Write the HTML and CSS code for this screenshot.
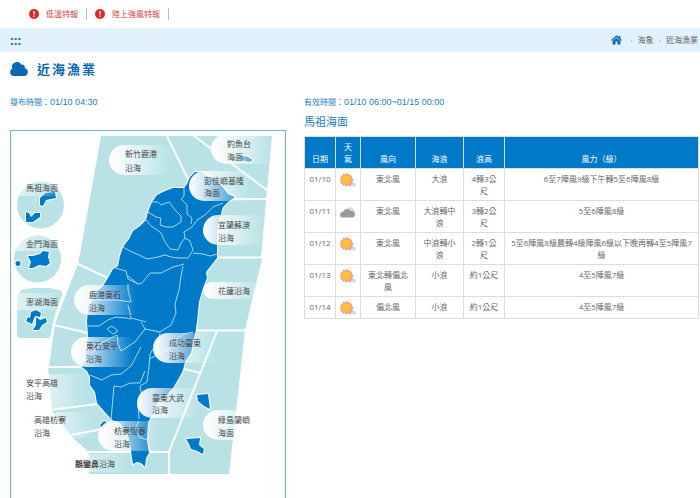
FILE: index.html
```html
<!DOCTYPE html>
<html lang="zh-Hant">
<head>
<meta charset="utf-8">
<title>近海漁業</title>
<link rel="stylesheet" href="styles.css">
</head>
<body>
<svg class="defs" aria-hidden="true">
  <symbol id="alert" viewBox="0 0 10 10"><circle cx="5" cy="5" r="5" fill="#d92b2b"/><path d="M4.4 2h1.2v3.7H4.4zM4.4 6.6h1.2v1.2H4.4z" fill="#fff"/></symbol>
  <symbol id="sun" viewBox="0 0 16 14">
    <path d="M9.500 13.400a2.200 2.200 0 0 1 .6-4 2.600 2.600 0 0 1 4.400.4 1.900 1.900 0 0 1-.1 3.600z" fill="#d9d9d9"/>
    <circle cx="6.500" cy="6.800" r="5.600" fill="none" stroke="#f4764c" stroke-width="1.600" stroke-dasharray="1.200 1"/>
    <circle cx="6.500" cy="6.800" r="4.800" fill="#ffbe3d" stroke="#f7844d" stroke-width=".6"/>
  </symbol>
  <symbol id="cloudy" viewBox="0 0 16 14">
    <path d="M7 10a4 4 0 0 1 .5-7 4 4 0 0 1 6 1.500A3 3 0 0 1 14 10z" fill="#dcdcdc"/>
    <path d="M2.800 12.500a2.800 2.800 0 0 1 .1-5.600 4.500 4.500 0 0 1 8-.7 3.200 3.200 0 0 1 1.400 6.300z" fill="#999"/>
  </symbol>
</svg>

<div class="alerts">
  <a class="alert" href="#"><svg class="alert-icon"><use href="#alert"/></svg>低溫特報</a>
  <a class="alert" href="#"><svg class="alert-icon"><use href="#alert"/></svg>陸上強風特報</a>
</div>

<nav class="crumbs">
  <a class="skip" href="#main">:::</a>
  <a class="home" href="#" aria-label="首頁"><svg viewBox="0 0 11 10"><path d="M5.500.2 0 5l.8.9 4.700-4 4.700 4L11 5 9.300 3.500V.8H7.700v1.300zM5.500 2.800 1.600 6.100V9.500h2.900V6.600h2v2.900h2.900V6.100z" fill="#0a69b0"/></svg></a>
  <span class="sep">›</span>
  <a href="#">海象</a>
  <span class="sep">›</span>
  <a href="#">近海漁業</a>
</nav>

<main id="main">
  <h1><svg class="cloud" viewBox="0 0 18 14"><path d="M4 14a4 4 0 0 1-1.800-7.500A5 5 0 0 1 11.400 2.700a2.700 2.700 0 0 1 3.300 3.500A3.950 3.950 0 0 1 14 14z" fill="#0a69b0"/></svg>近海漁業</h1>
  <div class="columns">
    <section>
      <p class="time">發布時間：<time>01/10 04:30</time></p>
      <div class="map">
        <svg viewBox="11 131 274 367" role="group" aria-label="近海漁業">
          <defs>
            <linearGradient id="fade"><stop offset="0" stop-color="#fff"/><stop offset=".25" stop-color="#fff" stop-opacity=".8"/><stop offset="1" stop-color="#fff" stop-opacity="0"/></linearGradient>
            <linearGradient id="haze"><stop offset="0" stop-color="#fff" stop-opacity=".55"/><stop offset="1" stop-color="#fff" stop-opacity="0"/></linearGradient>
            <path id="pill" d="M15 0H62V30H15A15 15 0 0 1 15 0z" fill="url(#fade)"/>
          </defs>
          <g class="sea">
            <path d="M101 136H272L261 257 262 259 245 330 240 375 229 474H89V452L72 437 52 411 48 366 54 325 78 264 82 243z"/>
            <circle cx="40.500" cy="205" r="23.500"/>
            <circle cx="37.500" cy="259" r="23.500"/>
            <path d="M17 301Q18 289 26 289Q45 286 59 290Q63 292 62 295L54 318 50 338H20Q17 338 17 334z"/>
          </g>
          <path class="bounds" d="M167 136 188 179M194 136 267 190M230 199H267M216 257.500H263M197 330.500H246M217 331 169 452V474M184 369 201 373M149 452H169M88 452H134M78 264 110 279M54 325 88 333M47 367H85M51 410 97 404M71 435 102 429"/>
          <path class="bounds" d="M64 294 54 325 48 366"/>
          <g class="land">
            <path d="M195 172 190 177 187 184 184 188 173 188 165 191 157 195 152 202 148 212 146 220 140 226 133 231 129 239 123 247 120 256 118 266 113 269 108 278 103 286 97 291 93 299 88 307 87 322 88 335 86 350 85 360 82 367 87 371 90 377 90 385 95 392 97 403 103 410 112 420 120 423 127 432 130 443 132 458 133 464 137 462 141 463 145 467 146 458 149 453 147 440 148 423 153 412 157 403 165 397 173 388 179 378 183 370 185 362 191 353 193 343 195 335 197 322 199 302 203 288 207 278 206 272 217 258 217 245 217 233 219 220 223 207 228 202 235 197 228 194 221 185 215 178 206 176 202 172z"/>
            <path d="M40 198 45 193 55 192 56 198 51 199 46 200 43 206 40 205z"/>
            <path d="M26 212 29 213 31 217 35 213 40 213 40 217 33 222 26 222z"/>
            <path d="M28 256 33 256 40 254 43 251 49 252 48 257 50 263 46 266 39 265 33 268 29 268 31 262z"/>
            <circle cx="18" cy="263.500" r="2.500"/>
            <path d="M31 312 36 310 41 313 40 317 35 316 32 324 26 321 28 317 30 318z"/>
            <path d="M36 317 40 320 46 318 47 322 42 325 39 330 33 330 36 325z"/>
            <path d="M239 155 248 157 253 160 249 162 241 160z"/>
            <path d="M197 395 208 394 210 409 204 406 198 401z"/>
            <path d="M186 439 200 438 199 445 204 449 203 454 197 451 191 449 189 444z"/>
            <path d="M102 430 100 425 104 421 108 423z"/>
          </g>
          <path class="counties" d="M152 202 158 202 161 205 169 202 176 211 181 216 181 222 173 227 166 227 160 225 161 218 156 217 148 212M146 220 151 226 156 229 161 233 165 242 170 249 178 250 181 243 185 238 184 232 192 227 197 220 205 215 213 207 223 203M184 188 184 196 181 199 187 205 187 214 192 218 191 224M192 188 198 183 202 181M123 247 130 251 139 255 147 259 158 257 165 255 171 257 179 258 188 258 193 250 190 241 185 238M193 253 203 254 210 256 217 254M184 264 173 267 161 273 150 273 142 283 138 284 128 279 126 271 115 268M183 266 181 276 179 290 175 304 176 313 171 325 160 332 145 329 141 322M138 284 128 276M128 284 128 290 131 302 117 300 93 300M128 305 131 318 146 322M88 326 99 326 108 320 116 317 126 318 131 319M107 329 112 326 118 331 113 334 107 329M160 333 159 341 155 346 150 354 149 367 147 382 140 386 142 396 138 404 139 419M145 329 135 342 121 351 118 344 117 335 103 342 91 354M90 375 102 380 111 375 121 374 131 366 141 347M111 420 114 386 121 387 130 383 140 383 145 371M149 359 157 355 167 350 175 341 183 334 193 332M139 421 135 429 139 437 147 440"/>
          <g fill="url(#fade)">
            <use href="#pill" x="109" y="145"/><use href="#pill" x="211" y="134"/>
            <use href="#pill" x="189" y="171"/><use href="#pill" x="203" y="215"/>
            <use href="#pill" x="74" y="285"/><use href="#pill" x="71" y="337"/>
            <use href="#pill" x="153" y="333"/><use href="#pill" x="137" y="388"/>
            <use href="#pill" x="98" y="421"/><use href="#pill" x="203" y="410"/>
            <path d="M212 282H262V299H212A8.500 8.500 0 0 1 212 282z"/>
          </g>
          <g fill="url(#haze)"><path d="M17 180H68V196H17z"/><path d="M15 236H68V251H15z"/><path d="M17 293H68V310H17z"/><path d="M48 374H85V408H48z"/><path d="M55 412H95V438H55z"/><path d="M76 454H130V472H76z"/></g>
          <g class="names">
            <a href="#"><text x="125" y="157">新竹鹿港<tspan x="125" y="171">沿海</tspan></text></a>
            <a href="#"><text x="227" y="147">釣魚台<tspan x="227" y="160">海面</tspan></text></a>
            <a href="#"><text x="204" y="184">彭佳嶼基隆<tspan x="204" y="196">海面</tspan></text></a>
            <a href="#"><text x="218" y="228">宜蘭蘇澳<tspan x="218" y="241">沿海</tspan></text></a>
            <a href="#"><text x="218" y="294">花蓮沿海</text></a>
            <a href="#"><text x="89" y="298">鹿港東石<tspan x="89" y="311">沿海</tspan></text></a>
            <a href="#"><text x="86" y="349">東石安平<tspan x="86" y="362">沿海</tspan></text></a>
            <a href="#"><text x="169" y="346">成功臺東<tspan x="169" y="359">沿海</tspan></text></a>
            <a href="#"><text x="152" y="401">臺東大武<tspan x="152" y="413">沿海</tspan></text></a>
            <a href="#"><text x="114" y="434">枋寮恆春<tspan x="114" y="447">沿海</tspan></text></a>
            <a href="#"><text x="218" y="423">綠島蘭嶼<tspan x="218" y="436">海面</tspan></text></a>
            <a href="#"><text x="26" y="191">馬祖海面</text></a>
            <a href="#"><text x="26" y="247">金門海面</text></a>
            <a href="#"><text x="26" y="305">澎湖海面</text></a>
            <a href="#"><text x="26" y="386">安平高雄<tspan x="26" y="399">沿海</tspan></text></a>
            <a href="#"><text x="34" y="423">高雄枋寮<tspan x="34" y="436">沿海</tspan></text></a>
            <a href="#"><text x="75" y="467"><tspan class="strong">鵝鑾鼻</tspan>沿海</text></a>
          </g>
        </svg>
      </div>
    </section>
    <section>
      <p class="time">有效時間：<time>01/10 06:00~01/15 00:00</time></p>
      <h2>馬祖海面</h2>
      <table>
        <colgroup><col class="c-date"><col class="c-sky"><col class="c-dir"><col class="c-wave"><col class="c-height"><col></colgroup>
        <thead><tr><th>日期</th><th>天氣</th><th>風向</th><th>海浪</th><th>浪高</th><th>風力（級）</th></tr></thead>
        <tbody>
          <tr><td>01/10</td><td><svg class="sky"><use href="#sun"/></svg></td><td>東北風</td><td>大浪</td><td>4轉3公尺</td><td>6至7陣風9級下午轉5至6陣風8級</td></tr>
          <tr><td>01/11</td><td><svg class="sky"><use href="#cloudy"/></svg></td><td>東北風</td><td>大浪轉中浪</td><td>3轉2公尺</td><td>5至6陣風8級</td></tr>
          <tr><td>01/12</td><td><svg class="sky"><use href="#sun"/></svg></td><td>東北風</td><td>中浪轉小浪</td><td>2轉1公尺</td><td>5至6陣風8級晨轉4級陣風6級以下晚再轉4至5陣風7級</td></tr>
          <tr><td>01/13</td><td><svg class="sky"><use href="#sun"/></svg></td><td>東北轉偏北風</td><td>小浪</td><td>約1公尺</td><td>4至5陣風7級</td></tr>
          <tr><td>01/14</td><td><svg class="sky"><use href="#sun"/></svg></td><td>偏北風</td><td>小浪</td><td>約1公尺</td><td>4至5陣風7級</td></tr>
        </tbody>
      </table>
    </section>
  </div>
</main>
</body>
</html>
```
FILE: styles.css
```css
* { box-sizing: border-box; }

body {
  margin: 0;
  background: #fff;
  color: #666;
  font: 8px/12px "Open Sans", "Noto Sans CJK TC", sans-serif;
}

a { color: inherit; text-decoration: none; }
p, h1, h2 { margin: 0; }
.defs { position: absolute; width: 0; height: 0; }

.alerts {
  display: flex;
  align-items: center;
  gap: 8px;
  height: 28px;
  padding-left: 29px;
}

.alert {
  display: flex;
  align-items: center;
  gap: 7px;
  padding-right: 8px;
  border-right: 1px solid #bbb;
  color: #d63b3b;
}

.alert-icon { width: 10px; height: 10px; }

.crumbs {
  display: flex;
  align-items: center;
  gap: 5px;
  height: 24px;
  padding: 0 2px 0 10px;
  background: #e1f2fd;
}

.skip { margin-right: auto; color: #0a69b0; font-size: 13px; font-weight: 700; }
.home { margin-right: 3px; }
.home svg { display: block; width: 11px; height: 10px; }
.sep { color: #aaa; }

main { padding: 0 1px 0 10px; }

h1 {
  display: flex;
  align-items: center;
  gap: 9px;
  height: 34px;
  color: #0a69b0;
  font-size: 13px;
  letter-spacing: 2px;
}

.cloud { width: 18px; height: 14px; }

.columns {
  display: grid;
  grid-template-columns: 276fr 395fr;
  gap: 18px;
  padding-top: 10px;
}

.time { color: #2380bf; }
.time time { font-family: "Liberation Sans", sans-serif; font-size: 9px; }

.map {
  margin-top: 22px;
  border: 1px solid #73b4df;
  border-bottom: 0;
}

.map svg { display: block; width: 100%; }

.sea { fill: #b8e2e6; }
.bounds { fill: none; stroke: #fff; stroke-width: 2; }
.land { fill: #007ac8; stroke: #fff; stroke-width: 2; stroke-linejoin: round; paint-order: stroke; }
.counties { fill: none; stroke: #a9d7f2; stroke-width: 1; stroke-linejoin: round; }
.names { fill: #444; }
.names .strong { font-weight: 700; }

h2 {
  margin: 5px 0 6px;
  color: #2380bf;
  font-size: 11px;
  font-weight: 400;
  line-height: 17px;
}

table {
  width: 100%;
  border-collapse: collapse;
  table-layout: fixed;
  text-align: center;
}

th, td { padding: 4px 4px 3px; border: 1px solid #ddd; }
th { background: #007ac8; color: #fff; font-weight: 400; vertical-align: bottom; }
th:nth-child(2) { padding-right: 6px; padding-left: 6px; }
td { vertical-align: top; }

.c-date { width: 31px; }
.c-sky { width: 25px; }
.c-dir { width: 55px; }
.c-wave { width: 48px; }
.c-height { width: 41px; }

.sky { display: block; width: 16px; height: 14px; }
```
